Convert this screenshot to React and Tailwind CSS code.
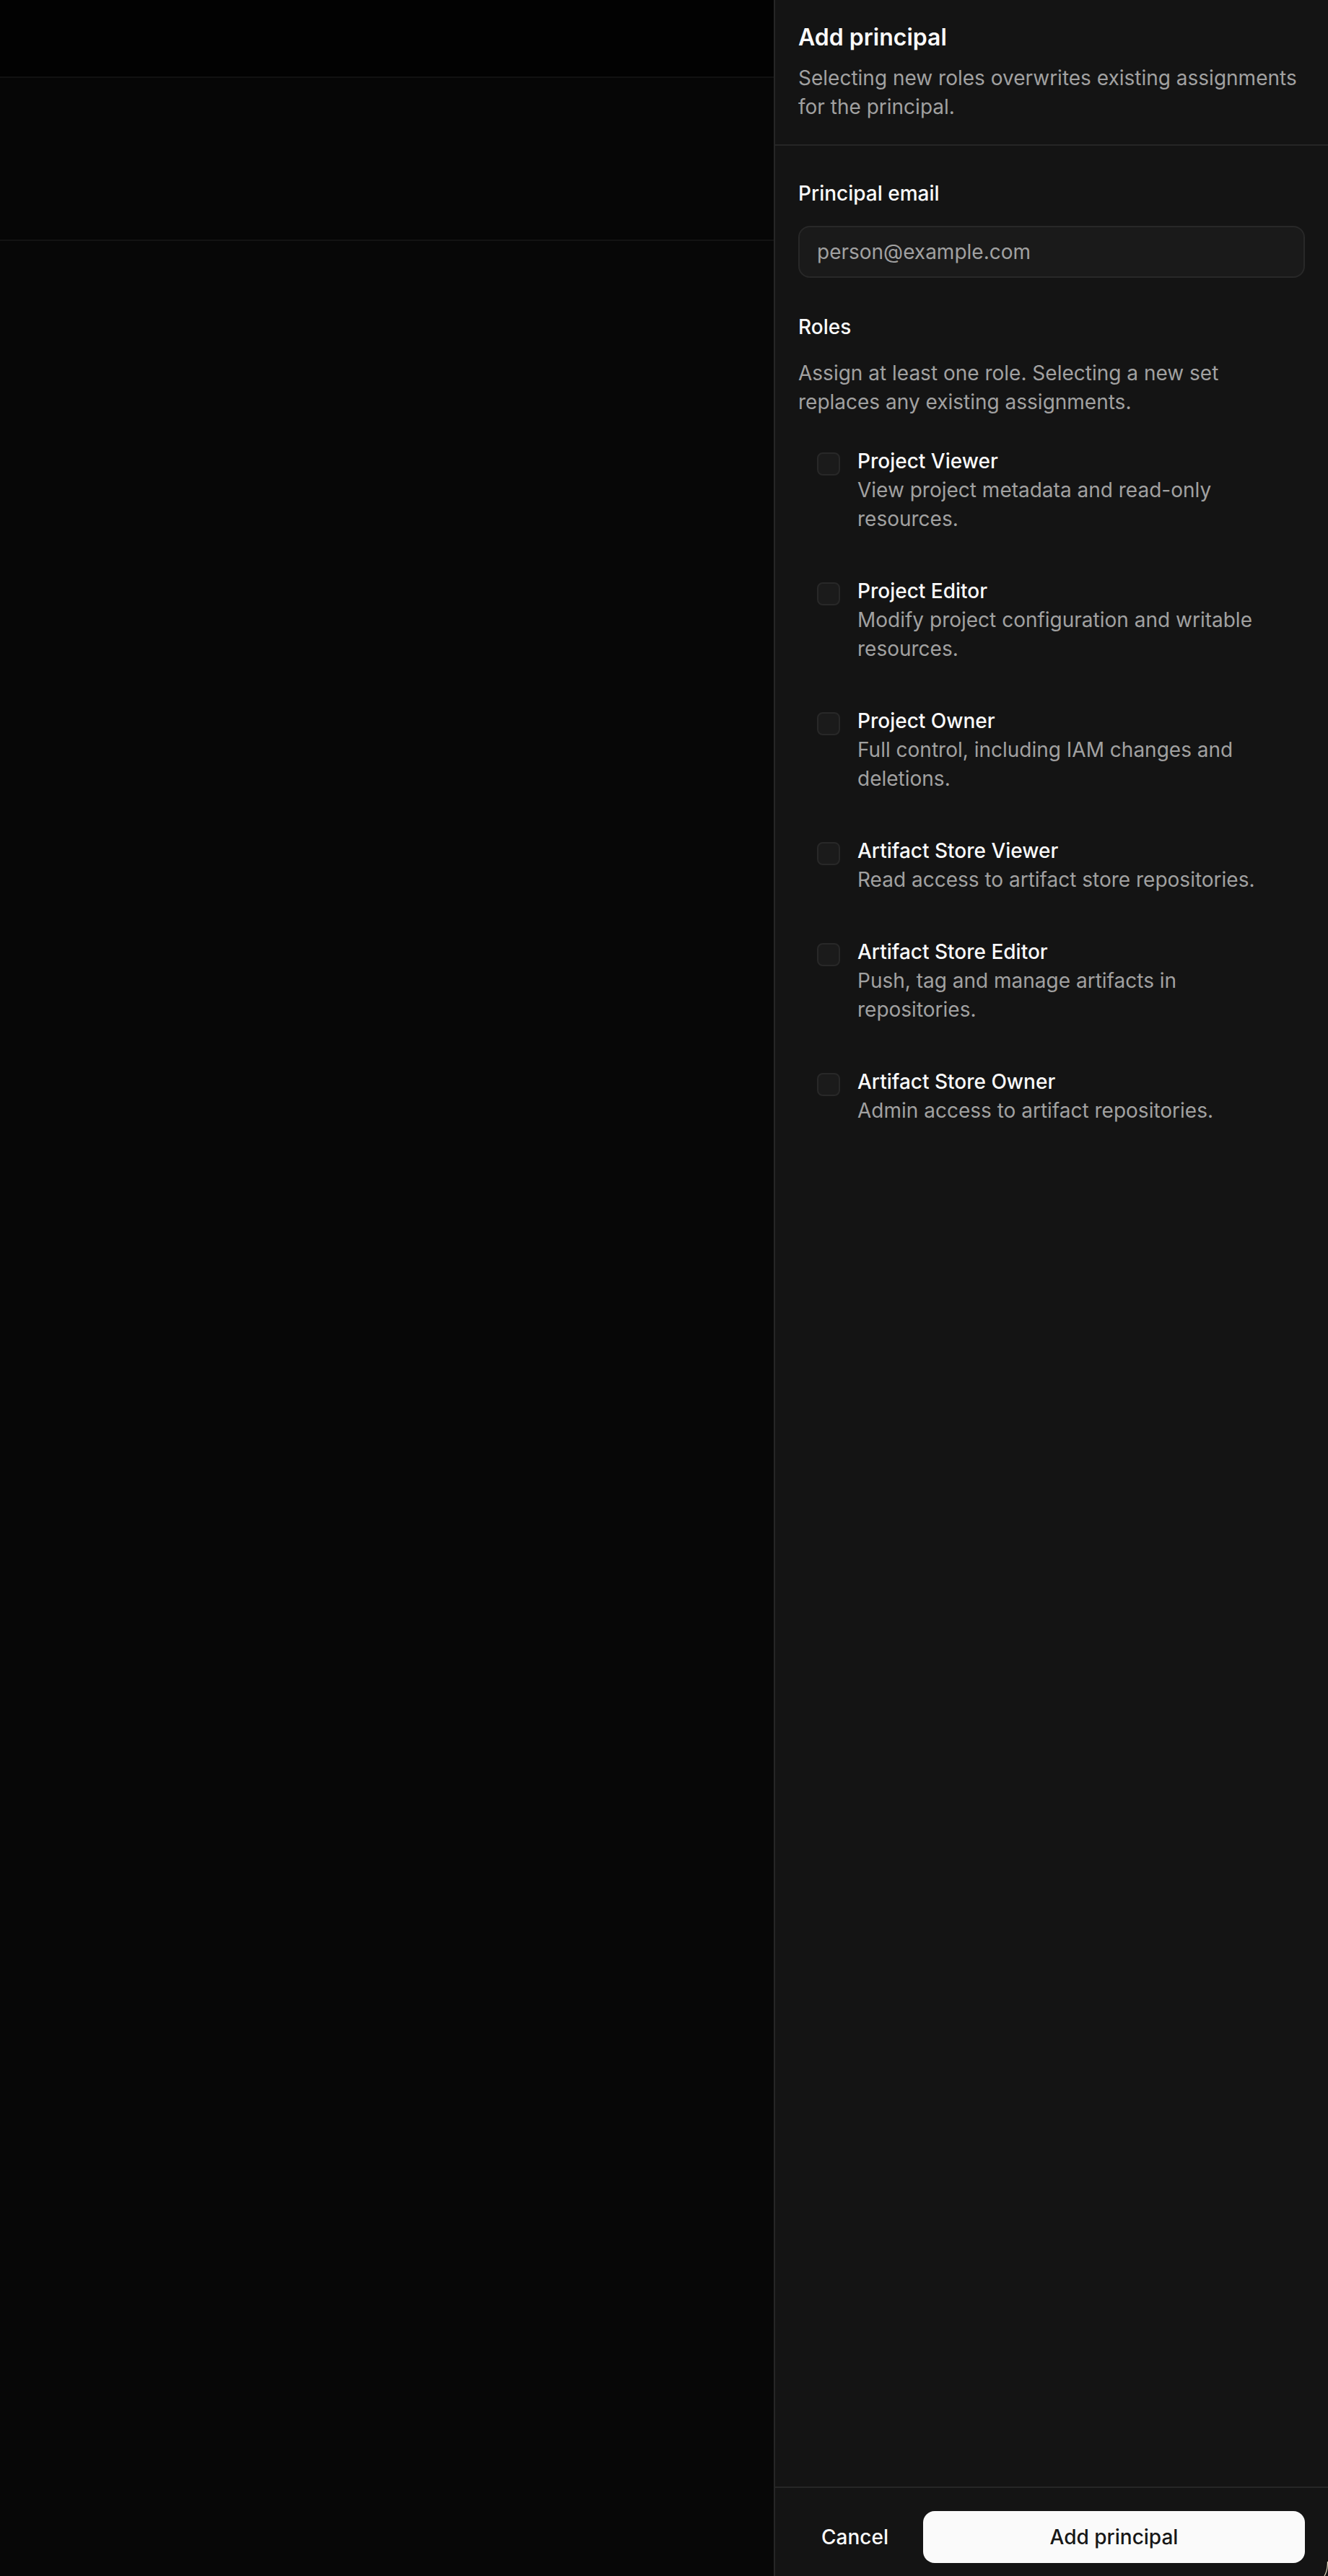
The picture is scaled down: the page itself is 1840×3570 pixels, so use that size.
const roles = [
  { name: 'Project Viewer', desc: 'View project metadata and read-only resources.' },
  { name: 'Project Editor', desc: 'Modify project configuration and writable resources.' },
  { name: 'Project Owner', desc: 'Full control, including IAM changes and deletions.' },
  { name: 'Artifact Store Viewer', desc: 'Read access to artifact store repositories.' },
  { name: 'Artifact Store Editor', desc: 'Push, tag and manage artifacts in repositories.' },
  { name: 'Artifact Store Owner', desc: 'Admin access to artifact repositories.' },
]

export default function App() {
  return (
    <div
      className="relative flex w-[1840px] h-[3570px] overflow-hidden bg-[#070707] antialiased"
      style={{ fontFamily: 'Inter, "Noto Sans", sans-serif' }}
    >
      {/* Page behind the sheet, dimmed by the overlay */}
      <div className="flex-1 flex flex-col">
        <div className="h-[108px] flex-shrink-0 bg-[#020202] border-b-2 border-[#111111]" />
        <div className="h-[226px] flex-shrink-0 bg-[#060606] border-b-2 border-[#131313]" />
        <div className="flex-1 bg-[#070707]" />
      </div>

      {/* Sheet */}
      <aside className="w-[768px] flex-shrink-0 flex flex-col bg-[#141414] border-l-2 border-[#262626]">
        <header className="px-[32px] pt-[28px] pb-[32px] border-b-2 border-[#262626] flex flex-col gap-[12px]">
          <h2 className="text-[32px] leading-[48px] font-semibold text-[#fafafa]">Add principal</h2>
          <p className="text-[28px] leading-[40px] text-[#a1a1a1]">
            Selecting new roles overwrites existing assignments for the principal.
          </p>
        </header>

        <div className="flex-1 px-[32px] pt-[46px]">
          <label className="block text-[28px] leading-[40px] font-medium text-[#fafafa]">Principal email</label>
          <input
            type="email"
            placeholder="person@example.com"
            className="mt-[25px] w-full h-[72px] px-[24px] rounded-[16px] border-2 border-[#282828] bg-[#1a1a1a] text-[28px] text-[#fafafa] placeholder:text-[#a1a1a1] outline-none"
          />

          <p className="mt-[48px] text-[28px] leading-[40px] font-medium text-[#fafafa]">Roles</p>
          <p className="mt-[24px] text-[28px] leading-[40px] text-[#a1a1a1]">
            Assign at least one role. Selecting a new set replaces any existing assignments.
          </p>

          <div className="mt-[42px] flex flex-col gap-[60px]">
            {roles.map(role => (
              <label key={role.name} className="flex items-start gap-[24px] pl-[26px] pr-[28px]">
                <span className="mt-[8px] w-[32px] h-[32px] flex-shrink-0 rounded-[8px] border-2 border-[#282828] bg-[#1b1b1b]" />
                <span className="flex flex-col">
                  <span className="text-[28px] leading-[40px] font-medium text-[#fafafa]">{role.name}</span>
                  <span className="text-[28px] leading-[40px] text-[#a1a1a1]">{role.desc}</span>
                </span>
              </label>
            ))}
          </div>
        </div>

        <footer className="border-t-2 border-[#262626] px-[32px] pt-[32px] pb-[18px] flex gap-[16px]">
          <button className="h-[72px] px-[32px] rounded-[16px] text-[28px] font-medium text-[#fafafa]">Cancel</button>
          <button className="flex-1 h-[72px] rounded-[16px] bg-[#fafafa] text-[28px] font-medium text-[#171717]">
            Add principal
          </button>
        </footer>
      </aside>

      {/* corner highlight at the bottom right edge */}
      <svg className="absolute right-0 bottom-0" width="8" height="20" viewBox="0 0 8 20" fill="none">
        <path d="M7.5 0 C7.5 8 6 15 3 20" stroke="#e6dcc0" strokeWidth="1.2" />
      </svg>
    </div>
  )
}
